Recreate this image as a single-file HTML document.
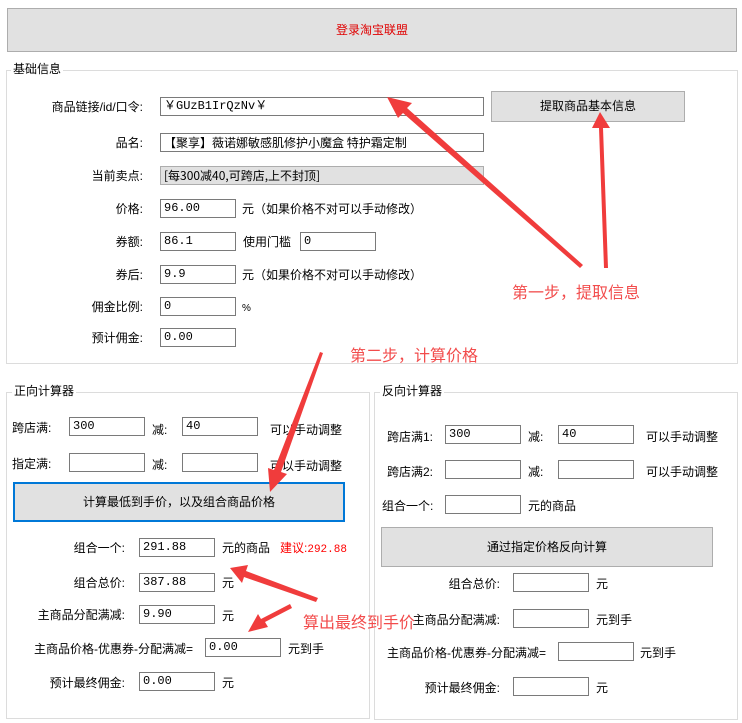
<!DOCTYPE html>
<html><head><meta charset="utf-8"><style>
body{margin:0;width:742px;height:723px;background:#fff;position:relative;overflow:hidden;font-family:"Liberation Sans","Noto Sans CJK SC",sans-serif;font-size:12px;color:#000}
.a{position:absolute;white-space:nowrap;line-height:14px}
.i{position:absolute;border:1px solid #7a7a7a;background:#fff;height:19px;box-sizing:border-box;width:76px;font-family:"Liberation Mono","Noto Sans CJK SC",monospace;font-size:12px;line-height:16px;padding-left:3px;white-space:nowrap;overflow:hidden}
.g{position:absolute;border:1px solid #dcdcdc}
.gl{position:absolute;background:#fff;padding:0 2px;line-height:14px}
.b{position:absolute;background:#e1e1e1;border:1px solid #adadad;box-sizing:border-box;text-align:center}
.r{position:absolute;color:#f24c4c;font-size:16px;white-space:nowrap;line-height:18px}
.rt{text-align:right}
</style></head><body>
<div class="b" style="left:7px;top:8px;width:730px;height:44px;line-height:42px;color:#e00000">登录淘宝联盟</div>

<div class="g" style="left:6px;top:70px;width:730px;height:292px"></div>
<div class="gl" style="left:11px;top:62px">基础信息</div>
<div class="a rt" style="left:20px;width:123px;top:100px">商品链接/id/口令:</div>
<div class="i" style="left:160px;top:97px;width:324px">￥GUzB1IrQzNv￥</div>
<div class="b" style="left:491px;top:91px;width:194px;height:31px;line-height:29px">提取商品基本信息</div>
<div class="a rt" style="left:20px;width:123px;top:136px">品名:</div>
<div class="i" style="left:160px;top:133px;width:324px;font-family:'Noto Sans CJK SC',sans-serif;line-height:17px">【聚享】薇诺娜敏感肌修护小魔盒 特护霜定制</div>
<div class="a rt" style="left:20px;width:123px;top:169px">当前卖点:</div>
<div class="i" style="left:160px;top:166px;width:324px;background:#e1e1e1;border-color:#adadad;font-family:'Noto Sans CJK SC',sans-serif;line-height:17px">[每300减40,可跨店,上不封顶]</div>
<div class="a rt" style="left:20px;width:123px;top:202px">价格:</div>
<div class="i" style="left:160px;top:199px">96.00</div>
<div class="a" style="left:242px;top:202px">元（如果价格不对可以手动修改）</div>
<div class="a rt" style="left:20px;width:123px;top:235px">券额:</div>
<div class="i" style="left:160px;top:232px">86.1</div>
<div class="a" style="left:243px;top:235px">使用门槛</div>
<div class="i" style="left:300px;top:232px">0</div>
<div class="a rt" style="left:20px;width:123px;top:268px">券后:</div>
<div class="i" style="left:160px;top:265px">9.9</div>
<div class="a" style="left:242px;top:268px">元（如果价格不对可以手动修改）</div>
<div class="a rt" style="left:20px;width:123px;top:300px">佣金比例:</div>
<div class="i" style="left:160px;top:297px">0</div>
<div class="a" style="left:242px;top:302px;font-size:10px">%</div>
<div class="a rt" style="left:20px;width:123px;top:331px">预计佣金:</div>
<div class="i" style="left:160px;top:328px">0.00</div>

<div class="g" style="left:6px;top:392px;width:362px;height:325px"></div>
<div class="gl" style="left:12px;top:384px">正向计算器</div>
<div class="a" style="left:12px;top:421px">跨店满:</div>
<div class="i" style="left:69px;top:417px">300</div>
<div class="a" style="left:152px;top:423px">减:</div>
<div class="i" style="left:182px;top:417px">40</div>
<div class="a" style="left:270px;top:423px">可以手动调整</div>
<div class="a" style="left:12px;top:457px">指定满:</div>
<div class="i" style="left:69px;top:453px"></div>
<div class="a" style="left:152px;top:458px">减:</div>
<div class="i" style="left:182px;top:453px"></div>
<div class="a" style="left:270px;top:459px">可以手动调整</div>
<div class="b" style="left:13px;top:482px;width:332px;height:40px;line-height:36px;border:2px solid #0078d7">计算最低到手价，以及组合商品价格</div>
<div class="a rt" style="left:20px;width:105px;top:541px">组合一个:</div>
<div class="i" style="left:139px;top:538px">291.88</div>
<div class="a" style="left:222px;top:541px">元的商品</div>
<div class="a" style="left:280px;top:541px;color:#f00">建议:<span style="font-family:'Liberation Mono',monospace;font-size:11px">292.88</span></div>
<div class="a rt" style="left:20px;width:105px;top:576px">组合总价:</div>
<div class="i" style="left:139px;top:573px">387.88</div>
<div class="a" style="left:222px;top:576px">元</div>
<div class="a rt" style="left:20px;width:105px;top:608px">主商品分配满减:</div>
<div class="i" style="left:139px;top:605px">9.90</div>
<div class="a" style="left:222px;top:609px">元</div>
<div class="a" style="left:34px;top:642px">主商品价格-优惠券-分配满减=</div>
<div class="i" style="left:205px;top:638px">0.00</div>
<div class="a" style="left:288px;top:642px">元到手</div>
<div class="a rt" style="left:20px;width:105px;top:676px">预计最终佣金:</div>
<div class="i" style="left:139px;top:672px">0.00</div>
<div class="a" style="left:222px;top:676px">元</div>

<div class="g" style="left:374px;top:392px;width:362px;height:326px"></div>
<div class="gl" style="left:380px;top:384px">反向计算器</div>
<div class="a" style="left:387px;top:430px">跨店满1:</div>
<div class="i" style="left:445px;top:425px">300</div>
<div class="a" style="left:528px;top:430px">减:</div>
<div class="i" style="left:558px;top:425px">40</div>
<div class="a" style="left:646px;top:430px">可以手动调整</div>
<div class="a" style="left:387px;top:465px">跨店满2:</div>
<div class="i" style="left:445px;top:460px"></div>
<div class="a" style="left:528px;top:465px">减:</div>
<div class="i" style="left:558px;top:460px"></div>
<div class="a" style="left:646px;top:465px">可以手动调整</div>
<div class="a" style="left:382px;top:499px">组合一个:</div>
<div class="i" style="left:445px;top:495px"></div>
<div class="a" style="left:528px;top:499px">元的商品</div>
<div class="b" style="left:381px;top:527px;width:332px;height:40px;line-height:38px">通过指定价格反向计算</div>
<div class="a rt" style="left:390px;width:110px;top:577px">组合总价:</div>
<div class="i" style="left:513px;top:573px"></div>
<div class="a" style="left:596px;top:577px">元</div>
<div class="a rt" style="left:390px;width:110px;top:613px">主商品分配满减:</div>
<div class="i" style="left:513px;top:609px"></div>
<div class="a" style="left:596px;top:613px">元到手</div>
<div class="a" style="left:387px;top:646px">主商品价格-优惠券-分配满减=</div>
<div class="i" style="left:558px;top:642px"></div>
<div class="a" style="left:640px;top:646px">元到手</div>
<div class="a rt" style="left:390px;width:110px;top:681px">预计最终佣金:</div>
<div class="i" style="left:513px;top:677px"></div>
<div class="a" style="left:596px;top:681px">元</div>

<div class="r" style="left:512px;top:285px">第一步，提取信息</div>
<div class="r" style="left:350px;top:348px">第二步，计算价格</div>
<div class="r" style="left:303px;top:615px">算出最终到手价</div>

<svg style="position:absolute;left:0;top:0" width="742" height="723">
<g fill="#f03c3c" stroke="none">
<polygon points="580,268 583,265 407,108 412,103 387,97 398,118 403,113"/>
<polygon points="604,268 608,268 603,128 610,128 600,112 592,128 599,128"/>
<polygon points="320,352 323,353 281,472 287,474 270,492 268,468 274,470"/>
<polygon points="316,602 318,598 246,571 248,565 230,568 242,583 244,577"/>
<polygon points="290,604 292,608 265,622 268,627 248,632 258,614 261,619"/>
</g>
</svg>
</body></html>
